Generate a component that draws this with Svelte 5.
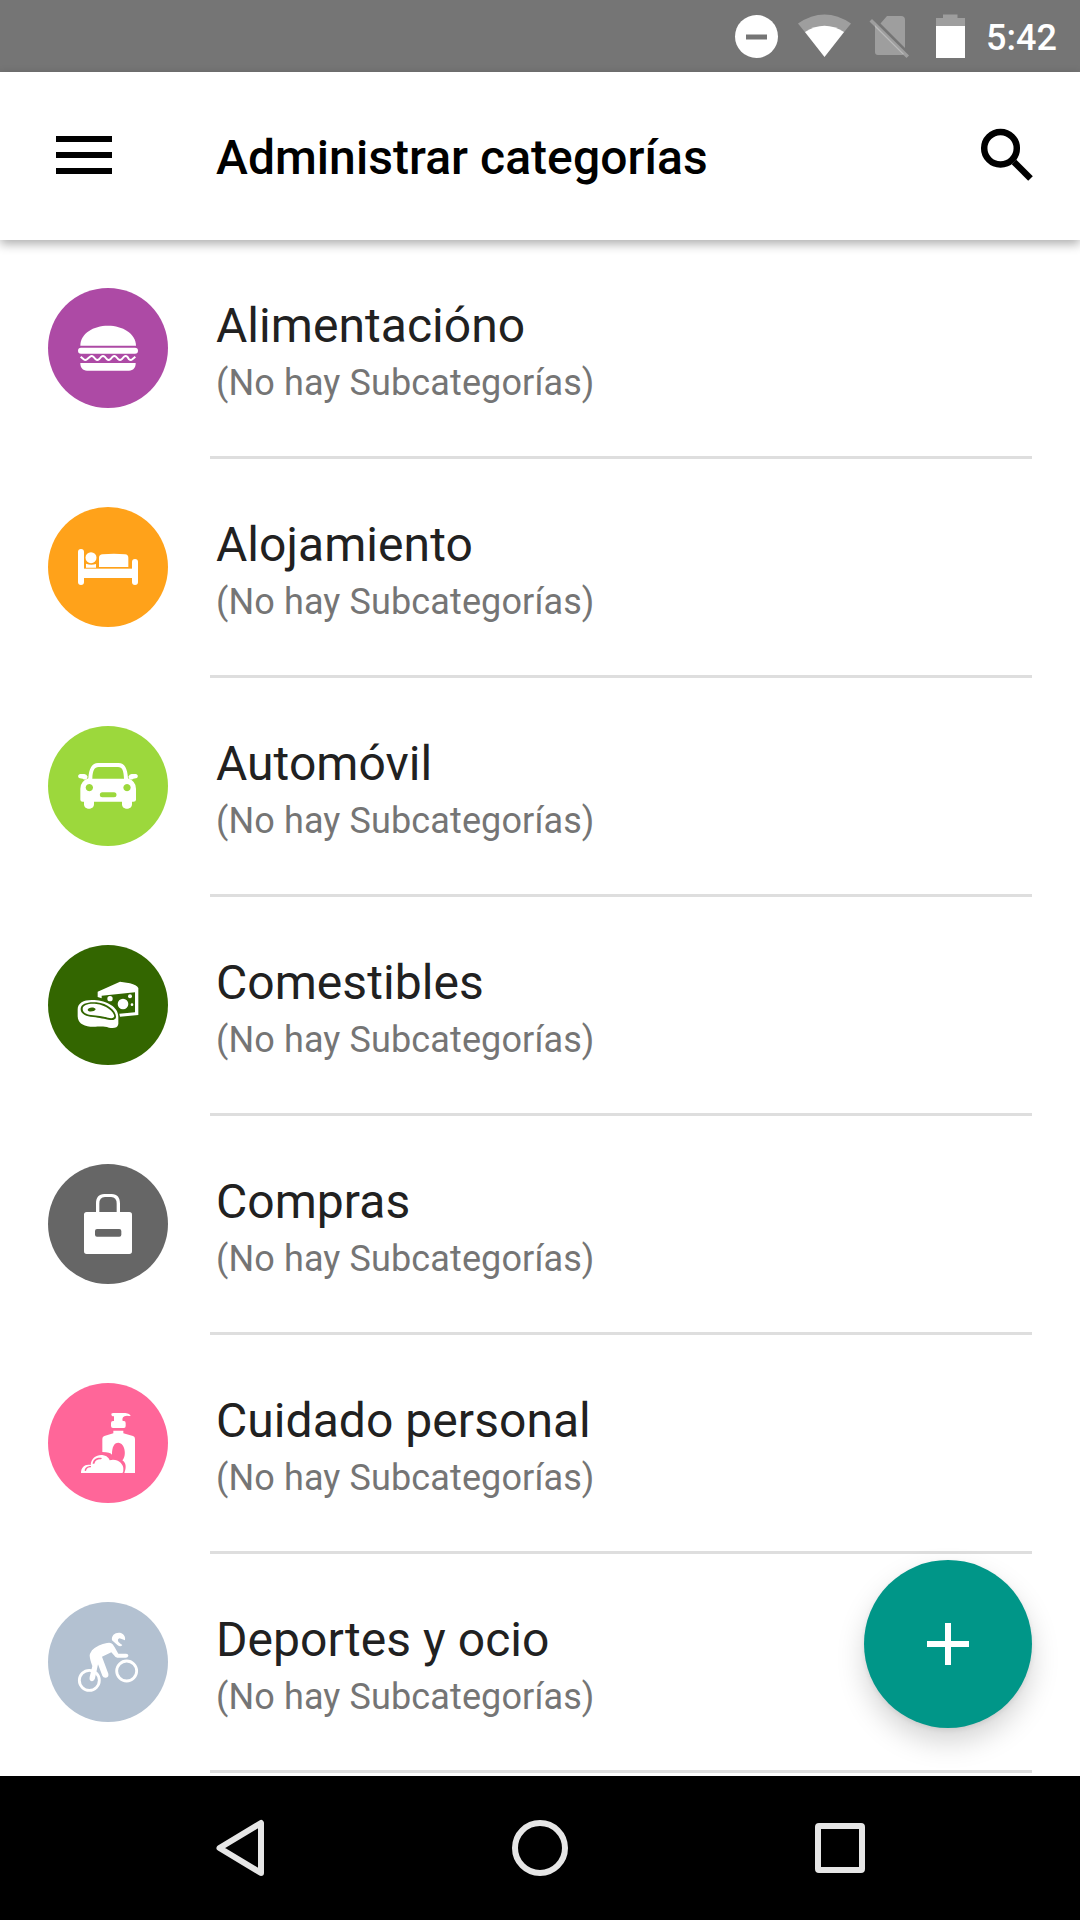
<script lang="ts">
  type IconName = 'burger' | 'bed' | 'car' | 'groceries' | 'bag' | 'soap' | 'bike'

  interface Category {
    name: string
    icon: IconName
  }

  const categories: Category[] = [
    { name: 'Alimentacióno', icon: 'burger' },
    { name: 'Alojamiento', icon: 'bed' },
    { name: 'Automóvil', icon: 'car' },
    { name: 'Comestibles', icon: 'groceries' },
    { name: 'Compras', icon: 'bag' },
    { name: 'Cuidado personal', icon: 'soap' },
    { name: 'Deportes y ocio', icon: 'bike' }
  ]
</script>

{#snippet glyph(icon: IconName)}
  {#if icon === 'burger'}
    <svg viewBox="24 24 360 360" fill="#fff">
      <path d="M121 197C121 160 160 137 204 137S287 160 288 197Z" />
      <rect x="114" y="203" width="180" height="18" rx="9" />
      <path
        d="M122 230l9 8q5 4 10 0l9-8q5-4 10 0l7 8q5 4 10 0l7-8q5-4 10 0l7 8q5 4 10 0l7-8q5-4 10 0l7 8q5 4 10 0l7-8q5-4 10 0l5 8q5 4 10 0l9-8"
        fill="none"
        stroke="#fff"
        stroke-width="6"
      />
      <path d="M121 249H287C287 263 280 272 267 272H141C128 272 121 263 121 249Z" />
    </svg>
  {:else if icon === 'bed'}
    <svg viewBox="24 21 360 360" fill="#fff">
      <rect x="114" y="147" width="18" height="108" rx="9" />
      <rect x="276" y="177" width="18" height="78" rx="9" />
      <rect x="122" y="206" width="164" height="28" />
      <circle cx="153" cy="173" r="16.5" />
      <path d="M138 191q15 6 30 1v11h-30z" />
      <path d="M188 163q34-4 67 0q10 1 10 10v28h-88v-28q0-9 11-10z" />
    </svg>
  {:else if icon === 'car'}
    <svg viewBox="24 24 360 360" fill="#fff">
      <path
        fill-rule="evenodd"
        d="M145 181C147 152 156 135 174 135H236C254 135 262 152 264 181Q288 190 288 212V245Q288 251 280 251H276V259C276 277 246 277 246 259V251H162V259C162 277 132 277 132 259V251H128Q121 251 121 245V212Q121 190 145 181ZM157 182H252C251 158 247 147 234 147H176C163 147 158 158 157 182ZM148 198a11 11 0 1 0 .1 0ZM261 198a11 11 0 1 0 .1 0ZM187 223a7.500 7.500 0 0 0 0 15H222a7.500 7.500 0 0 0 0-15Z"
      />
      <path d="M121 168h12q7 1 10 8l-3 7q-6 4-12-1l-8-1c-8-2-7-12 1-13zM287 168h-12q-7 1-10 8l3 7q6 4 12-1l8-1c8-2 7-12-1-13z" />
    </svg>
  {:else if icon === 'groceries'}
    <svg viewBox="24 27 360 360" fill="#fff">
      <path d="M173 167L240 137L270 142Q290 147 295 156V237L240 242L238 233L285 229V169L185 179V187L173 183Z" />
      <circle cx="210" cy="188" r="8" />
      <circle cx="249" cy="204" r="16" />
      <circle cx="270" cy="181" r="6" />
      <circle cx="276" cy="206" r="4" />
      <path
        fill-rule="evenodd"
        d="M113 220C113 199 134 190 163 192C200 194 235 213 235 242V264C233 276 221 278 207 275C188 269 176 273 151 272C126 269 113 259 113 239ZM122 218C121 230 133 239 151 242C174 244 187 247 205 251C218 254 227 252 228 243C229 226 204 202 169 199C143 197 123 203 122 218Z"
      />
      <path
        fill-rule="evenodd"
        d="M128 218C129 207 146 202 169 204C197 207 222 226 223 241C221 248 212 247 204 245C187 240 173 240 153 237C137 234 128 229 128 218ZM143 222C146 230 164 227 167 220C165 212 143 213 143 222Z"
      />
    </svg>
  {:else if icon === 'bag'}
    <svg viewBox="24 24 360 360" fill="#fff">
      <path
        fill-rule="evenodd"
        d="M140 168H168V143C168 125 176 114 193 114H215C232 114 240 125 240 143V168H268Q276 168 276 176V286Q276 294 268 294H140Q132 294 132 286V176Q132 168 140 168ZM178 168H230V143Q230 123 213 123H195Q178 123 178 143ZM171 219Q165 219 165 225V236Q165 242 171 242H238Q244 242 244 236V225Q244 219 238 219Z"
      />
    </svg>
  {:else if icon === 'soap'}
    <svg viewBox="24 27 360 360" fill="#fff">
      <path d="M214 119Q216 116 224 117H256Q270 119 272 126Q267 126 261 125Q252 125 249 130Q245 137 248 141H252Q257 141 257 147V156Q257 162 252 162H219Q213 162 213 156V147Q213 141 219 141H222V127Q214 128 214 119Z" />
      <path
        fill-rule="evenodd"
        d="M220 170H250V178L279 186Q285 188 285 195V297H253C260 280 258 266 247 259C261 245 255 207 235 206C222 206 216 219 216 242Q211 234 187 234V194Q187 188 193 186L220 178Z"
      />
      <path
        fill-rule="evenodd"
        d="M123 297C123 279 136 269 152 273C153 251 174 240 190 244C205 246 209 259 209 259C230 252 253 269 250 288Q250 297 247 297ZM138 291C139 283 145 279 153 280L153 276C142 275 134 282 134 290ZM163 269C166 258 174 255 183 256L186 252C170 248 159 257 158 269Z"
      />
    </svg>
  {:else if icon === 'bike'}
    <svg viewBox="24 24 360 360" fill="none" stroke="#fff" stroke-linecap="round" stroke-linejoin="round">
      <circle cx="148" cy="259" r="30" stroke-width="8.500" />
      <circle cx="260" cy="231" r="30" stroke-width="8.500" />
      <path
        d="M150 179L156 169Q175 151 201 147Q213 144 218 151L224 160L235 179H258Q266 180 265 186Q263 191 258 191H232Q226 191 222 184L214 175L186 188L205 239Q207 249 198 251Q190 252 187 245L174 211L166 248Q164 261 155 262Q147 260 149 249L157 216Q149 195 149 184Z"
        fill="#fff"
        stroke="none"
      />
      <path d="M216 139C213 123 228 113 243 117C253 121 257 129 255 139L239 133Q231 135 235 143Q240 149 247 153Q242 160 233 154Z" fill="#fff" stroke="none" />
    </svg>
  {/if}
{/snippet}

<div class="screen">
  <header class="status">
    <svg class="status-icons" viewBox="730 0 250 72" fill="#fff" aria-hidden="true">
      <circle cx="756.5" cy="36.500" r="21.500" />
      <path d="M746 34.500h21v5h-21z" fill="#757575" />
      <path d="M798 23.500Q824.500 5.500 851 23.500L824.500 56.500z" opacity=".3" />
      <path d="M805 32Q824.500 19.500 844 32L824.500 57z" />
      <path d="M887 16h14q4 0 4 4v28L880.500 23.500zM875 25l29 29q-1 1-2 1h-24q-3 0-3-3z" opacity=".3" />
      <path d="M869.500 21.500l2.500-2.500 37 36.500-2.500 2.500z" opacity=".3" />
      <path d="M943 14.500h14.500V18H965v8h-29v-8h7z" opacity=".3" />
      <path d="M936 26h29v32h-29z" />
    </svg>
    <span class="time">5:42</span>
  </header>

  <div class="toolbar">
    <button type="button" class="menu" aria-label="Menú">
      <svg viewBox="0 0 56 38"><path d="M0 0h56v6H0zM0 16h56v6H0zM0 32h56v6H0z" /></svg>
    </button>
    <h1>Administrar categorías</h1>
    <button type="button" class="search" aria-label="Buscar">
      <svg viewBox="0 0 54 54" fill="none" stroke="#000" stroke-width="6.500">
        <circle cx="20.500" cy="20.300" r="16.300" />
        <path d="M34 34L50.500 50.500" />
      </svg>
    </button>
  </div>

  <main>
    <ul>
      {#each categories as category}
        <li>
          <div class="avatar {category.icon}">{@render glyph(category.icon)}</div>
          <div class="body">
            <h2>{category.name}</h2>
            <p>(No hay Subcategorías)</p>
          </div>
        </li>
      {/each}
    </ul>
    <button type="button" class="fab" aria-label="Añadir">
      <svg viewBox="0 0 42 42"><path d="M18 0h6v18h18v6H24v18h-6V24H0v-6h18z" fill="#fff" /></svg>
    </button>
  </main>

  <nav>
    <svg viewBox="0 0 60 60"><path d="M9.500 30L51 5v50z" /></svg>
    <svg viewBox="0 0 60 60"><circle cx="30" cy="30" r="25" /></svg>
    <svg viewBox="0 0 60 60"><rect x="8" y="8" width="44" height="44" rx="1" /></svg>
  </nav>
</div>

<style>
  :global(body) {
    margin: 0;
  }

  .screen {
    width: 1080px;
    height: 1920px;
    display: flex;
    flex-direction: column;
    overflow: hidden;
    background: #fff;
    font-family: Roboto, sans-serif;
  }

  svg {
    display: block;
  }

  button {
    padding: 0;
    border: 0;
    background: none;
  }

  .status {
    flex: none;
    height: 72px;
    display: flex;
    align-items: center;
    justify-content: flex-end;
    padding-right: 24px;
    background: #757575;
  }

  .status-icons {
    width: 250px;
    height: 72px;
    margin-right: 6px;
  }

  .time {
    width: 70px;
    padding-top: 3px;
    color: #fff;
    font-size: 36px;
    font-weight: 500;
    line-height: 42px;
    white-space: nowrap;
  }

  .toolbar {
    position: relative;
    z-index: 1;
    flex: none;
    height: 168px;
    box-sizing: border-box;
    display: flex;
    align-items: center;
    padding: 0 46px 0 56px;
    background: #fff;
    box-shadow: 0 4px 10px rgba(0, 0, 0, 0.32);
  }

  .menu,
  .search {
    margin-bottom: 2px;
  }

  .menu svg {
    width: 56px;
    height: 38px;
  }

  .search svg {
    width: 54px;
    height: 54px;
  }

  h1 {
    flex: 1;
    margin: 0 0 0 104px;
    padding-top: 3px;
    color: #000;
    font-size: 48px;
    font-weight: 500;
    line-height: 56px;
    letter-spacing: 0.05px;
  }

  main {
    position: relative;
    flex: 1;
    min-height: 0;
  }

  ul {
    margin: 0;
    padding: 0;
    list-style: none;
  }

  li {
    height: 219px;
    display: flex;
    padding: 0 48px;
  }

  .avatar {
    flex: none;
    width: 120px;
    height: 120px;
    margin: 48px 42px 0 0;
    border-radius: 50%;
  }

  .burger {
    background: #ad4aa5;
  }

  .bed {
    background: #ffa21a;
  }

  .car {
    background: #9cd83c;
  }

  .groceries {
    background: #336600;
  }

  .bag {
    background: #666666;
  }

  .soap {
    background: #ff6699;
  }

  .bike {
    background: #b3c1d1;
  }

  .body {
    flex: 1;
    box-sizing: border-box;
    padding: 58px 0 0 6px;
    border-bottom: 3px solid #dedede;
  }

  h2 {
    margin: 0;
    color: #212121;
    font-size: 48px;
    font-weight: 400;
    line-height: 56px;
    letter-spacing: 0.05px;
  }

  p {
    margin: 8px 0 0;
    color: #757575;
    font-size: 36px;
    line-height: 42px;
    letter-spacing: 0.12px;
  }

  .fab {
    position: absolute;
    right: 48px;
    bottom: 48px;
    width: 168px;
    height: 168px;
    display: flex;
    align-items: center;
    justify-content: center;
    border-radius: 50%;
    background: #009688;
    box-shadow: 0 14px 28px rgba(0, 0, 0, 0.17), 0 2px 5px rgba(0, 0, 0, 0.08);
  }

  .fab svg {
    width: 42px;
    height: 42px;
  }

  nav {
    position: relative;
    flex: none;
    height: 144px;
    box-sizing: border-box;
    display: flex;
    align-items: center;
    justify-content: space-between;
    padding: 0 210px;
    background: #000;
  }

  nav svg {
    width: 60px;
    height: 60px;
    fill: none;
    stroke: #e6e6e6;
    stroke-width: 6;
    stroke-linejoin: round;
  }
</style>
